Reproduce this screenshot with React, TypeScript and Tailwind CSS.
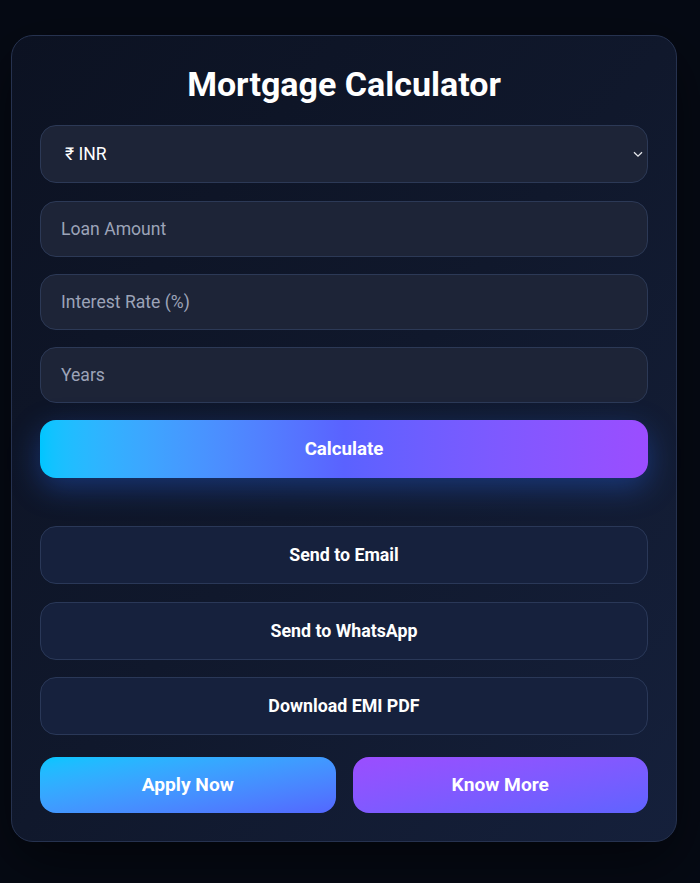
import React from "react";

export default function App() {
  return (
    <div
      className="min-h-[883px] w-[700px] bg-[#060a14] pt-[35px] pl-[11px]"
      style={{ fontFamily: "Roboto, 'Liberation Sans', sans-serif" }}
    >
      <div className="w-[666px] rounded-[22px] border border-[#26324f] bg-gradient-to-br from-[#0c1222] via-[#10182c] to-[#15203b] px-[28px] pt-[28px] pb-[28px] shadow-[0_20px_60px_rgba(0,0,0,0.5)]">
        <h1 className="mb-[20px] h-[41px] text-center text-[34px] font-bold leading-[41px] text-white">
          Mortgage Calculator
        </h1>

        <div className="flex flex-col">
          <div className="relative flex h-[58px] items-center rounded-[16px] border border-[#2c3956] bg-[#1d2437] pl-[24px]">
            <span className="text-[17.6px] text-white">₹ INR</span>
            <svg
              className="absolute right-[4px] top-[25px]"
              width="10"
              height="7"
              viewBox="0 0 10 7"
              fill="none"
            >
              <path d="M1 1.2 L5 5.2 L9 1.2" stroke="#e5e7eb" strokeWidth="1.3" />
            </svg>
          </div>

          <div className="mt-[18px] flex h-[56px] items-center rounded-[16px] border border-[#2c3956] bg-[#1d2437] pl-[20px]">
            <span className="text-[17.6px] text-[#9ca3b8]">Loan Amount</span>
          </div>
          <div className="mt-[17px] flex h-[56px] items-center rounded-[16px] border border-[#2c3956] bg-[#1d2437] pl-[20px]">
            <span className="text-[17.6px] text-[#9ca3b8]">Interest Rate (%)</span>
          </div>
          <div className="mt-[17px] flex h-[56px] items-center rounded-[16px] border border-[#2c3956] bg-[#1d2437] pl-[20px]">
            <span className="text-[17.6px] text-[#9ca3b8]">Years</span>
          </div>

          <div className="mt-[17px] flex h-[58px] items-center justify-center rounded-[16px] bg-gradient-to-r from-[#00c6ff] via-[#5a62ff] to-[#9b4dff] text-[18.7px] font-bold text-white shadow-[0_10px_30px_rgba(40,110,255,0.35)]">
            Calculate
          </div>

          <div className="mt-[48px] flex h-[58px] items-center justify-center rounded-[16px] border border-[#2a3858] bg-[#16213d] text-[17.8px] font-bold text-white">
            Send to Email
          </div>
          <div className="mt-[18px] flex h-[58px] items-center justify-center rounded-[16px] border border-[#2a3858] bg-[#16213d] text-[17.8px] font-bold text-white">
            Send to WhatsApp
          </div>
          <div className="mt-[17px] flex h-[58px] items-center justify-center rounded-[16px] border border-[#2a3858] bg-[#16213d] text-[17.8px] font-bold text-white">
            Download EMI PDF
          </div>

          <div className="mt-[22px] grid grid-cols-2 gap-[17px]">
            <div className="flex h-[56px] items-center justify-center rounded-[16px] bg-gradient-to-br from-[#00c6ff] to-[#5366ff] text-[19.2px] font-bold text-white">
              Apply Now
            </div>
            <div className="flex h-[56px] items-center justify-center rounded-[16px] bg-gradient-to-br from-[#9b4dff] to-[#5f63ff] text-[19.2px] font-bold text-white">
              Know More
            </div>
          </div>
        </div>
      </div>
    </div>
  );
}
